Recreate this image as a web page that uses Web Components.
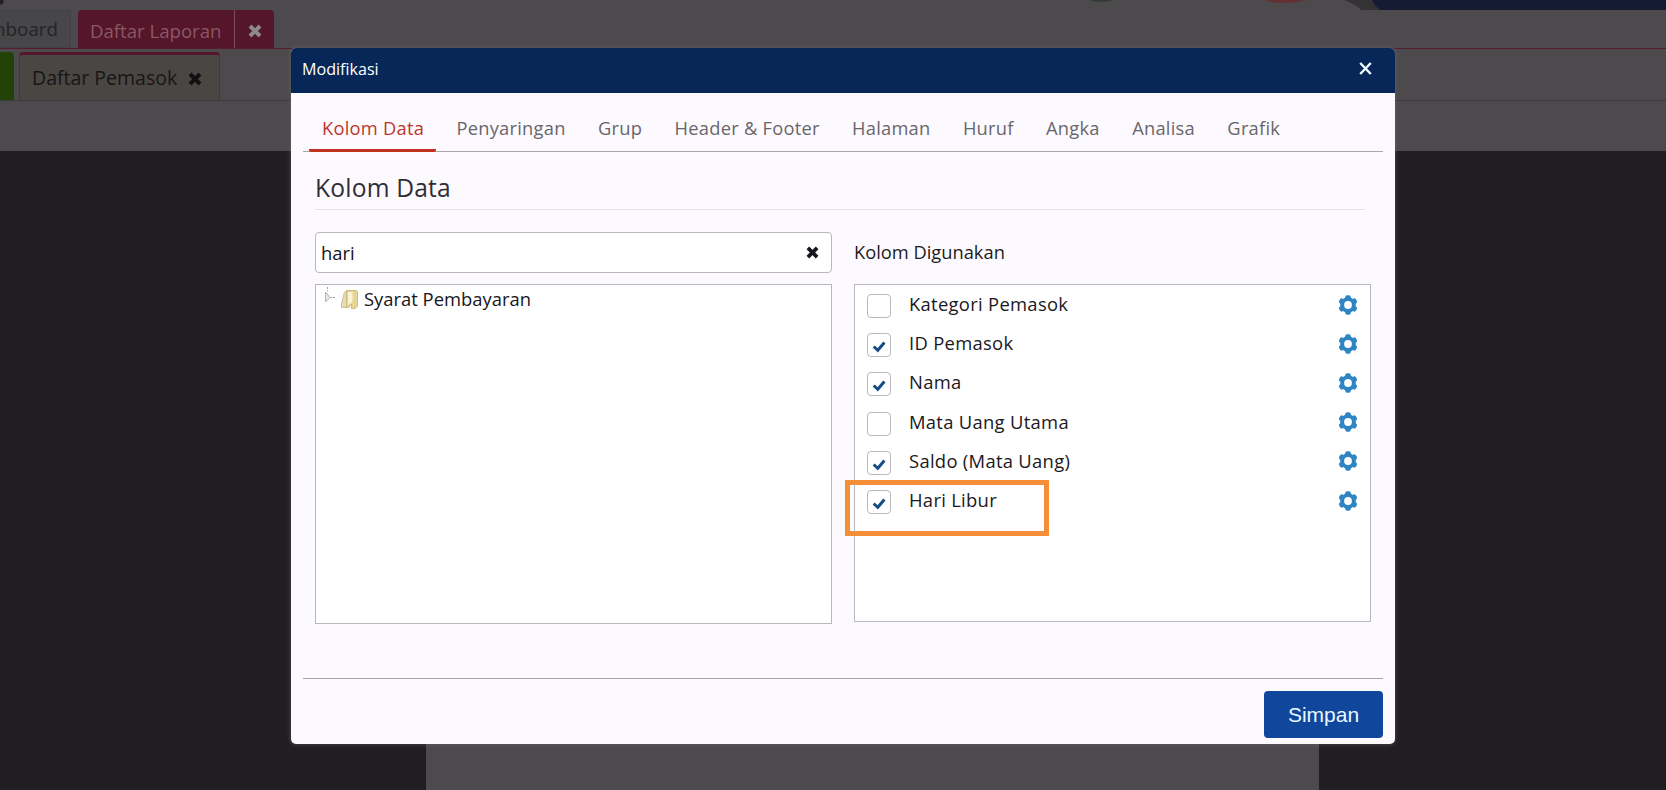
<!DOCTYPE html>
<html lang="id">
<head>
<meta charset="utf-8">
<title>Modifikasi</title>
<style>
  body {
    margin: 0;
    width: 1666px;
    height: 790px;
    overflow: hidden;
    position: relative;
    background: #211e21;
    font-family: "Open Sans", "Noto Sans", sans-serif;
  }
  modify-dialog {
    position: absolute;
    left: 291px;
    top: 48px;
  }
</style>
</head>
<body>
<report-page></report-page>

<modify-dialog heading="Modifikasi">
  <dialog-tabs slot="tabs">
    <dialog-tab active>Kolom Data</dialog-tab>
    <dialog-tab>Penyaringan</dialog-tab>
    <dialog-tab>Grup</dialog-tab>
    <dialog-tab>Header &amp; Footer</dialog-tab>
    <dialog-tab>Halaman</dialog-tab>
    <dialog-tab>Huruf</dialog-tab>
    <dialog-tab>Angka</dialog-tab>
    <dialog-tab>Analisa</dialog-tab>
    <dialog-tab>Grafik</dialog-tab>
  </dialog-tabs>
  <column-picker heading="Kolom Data">
    <search-box slot="search">hari</search-box>
    <tree-panel slot="tree">Syarat Pembayaran</tree-panel>
    <column-row>Kategori Pemasok</column-row>
    <column-row checked>ID Pemasok</column-row>
    <column-row checked>Nama</column-row>
    <column-row>Mata Uang Utama</column-row>
    <column-row checked>Saldo (Mata Uang)</column-row>
    <column-row checked highlight>Hari Libur</column-row>
  </column-picker>
  <save-button slot="footer">Simpan</save-button>
</modify-dialog>

<script>
class CrossIcon extends HTMLElement {
  connectedCallback() {
    this.attachShadow({ mode: 'open' });
    this.shadowRoot.innerHTML = `
      <style>
        :host { display: block; width: 14px; height: 14px; flex: none; }
        svg { display: block; width: 100%; height: 100%; }
      </style>
      <svg viewBox="0 0 14 14"><path d="M2 2 12 12M12 2 2 12" stroke="currentColor" stroke-width="4"/></svg>
    `;
  }
}
customElements.define('cross-icon', CrossIcon);

class ReportPage extends HTMLElement {
  connectedCallback() {
    this.attachShadow({ mode: 'open' });
    this.shadowRoot.innerHTML = `
      <style>
        :host { display: flex; flex-direction: column; height: 790px; }
        .row { display: flex; box-sizing: border-box; background: #4c4a4c; }
        .banner { height: 10px; }
        .banner svg { display: block; }
        .modules { height: 39px; border-bottom: 1px solid #541c2c; gap: 7px; }
        .tab { display: flex; align-items: center; box-sizing: border-box; white-space: nowrap; }
        .dash {
          width: 71px; justify-content: flex-end; padding: 0 12px 0 0; overflow: hidden;
          background: #474649; border: 1px solid #444145; border-left: 0; border-radius: 0 4px 0 0;
          color: #252426; font-size: 18.8px;
        }
        .red { width: 196px; background: #55152a; border-radius: 4px 4px 0 0; color: #8b5867; font-size: 18.6px; }
        .red .name { width: 157px; box-sizing: border-box; padding: 0 0 0 12px; height: 38px; line-height: 41px; border-right: 1px solid #79505c; }
        .red cross-icon { margin: 3px 0 0 13px; color: #8d8a8c; }
        .reports { height: 52px; padding-top: 3px; border-bottom: 1px solid #393739; gap: 5px; }
        .green { width: 14px; background: #234207; border-radius: 0 4px 0 0; }
        .page {
          width: 201px; padding: 0 0 0 12px; background: #4a4643;
          border: 1px solid #3b393b; border-top: 3px solid #55152a; border-bottom: 0; border-radius: 4px 4px 0 0;
          color: #171518; font-size: 19.5px;
        }
        .page cross-icon { margin: 3px 0 0 11px; color: #121013; }
        .toolbar { height: 50px; }
        .canvas { flex: 1; background: #211e21; display: flex; justify-content: center; }
        .paper { width: 893px; margin-left: 79px; background: #4c4a4c; }
      </style>
      <div class="row banner">
        <svg width="1666" height="10">
          <ellipse cx="1" cy="1" rx="2.5" ry="3.5" fill="#222023"/>
          <path d="M1089 0Q1100 4 1114 0Z" fill="#343b34"/>
          <path d="M1264 0Q1281 6 1308 0Z" fill="#633133"/>
          <path d="M1344 0Q1356 4 1361 10H1385V0Z" fill="#353235"/>
          <path d="M1372 0Q1375 7 1381 10H1666V0Z" fill="#141b32"/>
        </svg>
      </div>
      <div class="row modules">
        <div class="tab dash">Dashboard</div>
        <div class="tab red"><span class="name">Daftar Laporan</span><cross-icon></cross-icon></div>
      </div>
      <div class="row reports">
        <div class="tab green"></div>
        <div class="tab page"><span>Daftar Pemasok</span><cross-icon></cross-icon></div>
      </div>
      <div class="row toolbar"></div>
      <div class="canvas"><div class="paper"></div></div>
    `;
  }
}
customElements.define('report-page', ReportPage);

class ModifyDialog extends HTMLElement {
  connectedCallback() {
    this.attachShadow({ mode: 'open' });
    this.shadowRoot.innerHTML = `
      <style>
        :host {
          display: flex; flex-direction: column; box-sizing: border-box;
          width: 1104px; height: 696px; background: #fcfafe;
          border-radius: 5px; box-shadow: 0 0 5px rgba(110,110,110,.6);
        }
        header {
          height: 45px; box-sizing: border-box; padding: 0 23px 4px 11px; border-radius: 5px 5px 0 0;
          display: flex; align-items: center; justify-content: space-between;
          background: #082759; color: #fff; font-size: 16.1px;
        }
        header svg { display: block; }
        main { flex: 1; }
        footer {
          height: 66px; box-sizing: border-box; margin: 0 12px; padding-top: 12px;
          border-top: 1px solid #a5a3a9; display: flex; justify-content: flex-end; align-items: flex-start;
        }
      </style>
      <header>
        <span>${this.getAttribute('heading')}</span>
        <svg width="13" height="13" viewBox="0 0 13 13"><path d="M1.2 1 11.8 12M11.8 1 1.2 12" stroke="#eefcff" stroke-width="2.4"/></svg>
      </header>
      <slot name="tabs"></slot>
      <main><slot></slot></main>
      <footer><slot name="footer"></slot></footer>
    `;
  }
}
customElements.define('modify-dialog', ModifyDialog);

class DialogTabs extends HTMLElement {
  connectedCallback() {
    this.attachShadow({ mode: 'open' });
    this.shadowRoot.innerHTML = `
      <style>
        :host {
          display: flex; gap: 7.4px; box-sizing: border-box; height: 59px;
          margin: 0 12px; padding-left: 6px; border-bottom: 1px solid #aaa6ac;
        }
      </style>
      <slot></slot>
    `;
  }
}
customElements.define('dialog-tabs', DialogTabs);

class DialogTab extends HTMLElement {
  connectedCallback() {
    this.attachShadow({ mode: 'open' });
    this.shadowRoot.innerHTML = `
      <style>
        :host {
          display: block; box-sizing: border-box; height: 59px; padding: 22px 12px 0 13px;
          font-size: 18.3px; line-height: 26px; letter-spacing: .25px; white-space: nowrap;
          color: #69666b; border-bottom: 3px solid transparent; border-radius: 2px;
        }
        :host([active]) { color: #c0352b; border-bottom-color: #c2301f; }
      </style>
      <slot></slot>
    `;
  }
}
customElements.define('dialog-tab', DialogTab);

class ColumnPicker extends HTMLElement {
  connectedCallback() {
    this.attachShadow({ mode: 'open' });
    this.shadowRoot.innerHTML = `
      <style>
        :host { display: block; padding: 0 24px; }
        h2 {
          margin: 0; height: 58px; box-sizing: border-box; padding-top: 19px;
          font-size: 24.6px; line-height: 34px; font-weight: 400; letter-spacing: .2px; color: #302e35;
          border-bottom: 1px solid #e6e3e8; margin-right: 6px;
        }
        .grid {
          display: grid; grid-template-columns: 517px 517px; grid-template-rows: 41px auto;
          column-gap: 22px; row-gap: 11px; align-items: start; padding-top: 22px;
        }
        .label { font-size: 18.3px; line-height: 25px; padding: 7px 0 0 0; color: #1d1a20; }
        .used {
          height: 338px; box-sizing: border-box; padding: 1px 0;
          background: #fff; border: 1px solid #b9b6bd;
        }
      </style>
      <h2>${this.getAttribute('heading')}</h2>
      <div class="grid">
        <slot name="search"></slot>
        <div class="label">Kolom Digunakan</div>
        <slot name="tree"></slot>
        <div class="used"><slot></slot></div>
      </div>
    `;
  }
}
customElements.define('column-picker', ColumnPicker);

class SearchBox extends HTMLElement {
  connectedCallback() {
    this.attachShadow({ mode: 'open' });
    this.shadowRoot.innerHTML = `
      <style>
        :host {
          display: flex; align-items: center; justify-content: space-between; box-sizing: border-box;
          height: 41px; padding: 0 12px 0 5px; background: #fff;
          border: 1px solid #bab7be; border-radius: 4px; font-size: 18.4px; color: #141118;
        }
        cross-icon { width: 13px; height: 13px; color: #17151b; }
      </style>
      <span><slot></slot></span>
      <cross-icon></cross-icon>
    `;
  }
}
customElements.define('search-box', SearchBox);

class TreePanel extends HTMLElement {
  connectedCallback() {
    this.attachShadow({ mode: 'open' });
    this.shadowRoot.innerHTML = `
      <style>
        :host {
          display: block; box-sizing: border-box; height: 340px; padding: 1px 0 0 8px;
          background: #fff; border: 1px solid #b9b6bd;
        }
        .node { display: flex; align-items: flex-start; font-size: 18.4px; line-height: 26px; color: #18151b; }
        .node span { margin-left: 1px; }
      </style>
      <div class="node">
        <svg width="39" height="26">
          <path d="M3.5 1V5M6 11.5H12" fill="none" stroke="#a09ea2" stroke-dasharray="2 1"/>
          <path d="M1.5 6V16L6 11.5Z" fill="#e9e7eb" stroke="#b5b2b7"/>
          <path d="M20.5 6 23 4.5V21.5H17.5V18Z" fill="#e6dcb8" stroke="#cdc196"/>
          <path d="M22.5 4.5H32.5L33.5 6V20.5L31 22.5H27.5V18L24.5 21.5H22.5Z" fill="#e6d696" stroke="#cdbc80"/>
          <path d="M24 6H28.5V16L24 19Z" fill="#fbf4d3"/>
        </svg>
        <span><slot></slot></span>
      </div>
    `;
  }
}
customElements.define('tree-panel', TreePanel);

class ColumnRow extends HTMLElement {
  connectedCallback() {
    this.attachShadow({ mode: 'open' });
    const tick = this.hasAttribute('checked')
      ? '<path d="M6.7 12.5 10.8 16.3 17.4 8.6" fill="none" stroke="#174d86" stroke-width="3"/>'
      : '';
    this.shadowRoot.innerHTML = `
      <style>
        :host {
          display: flex; align-items: flex-start; position: relative; box-sizing: border-box;
          height: 39.2px; padding: 0 12px 0 12px;
        }
        .box {
          width: 24px; height: 24px; box-sizing: border-box; margin: 8px 18px 0 0; flex: none;
          border: 1px solid #bbb8be; border-radius: 4px; background: #fff;
        }
        .box svg { display: block; margin: 0 -1px; }
        .name { flex: 1; padding-top: 5px; font-size: 18.4px; line-height: 26px; letter-spacing: .3px; color: #1b181e; }
        .gear { margin-top: 8.6px; flex: none; }
        .mark {
          position: absolute; left: -10px; top: -2px; width: 204px; height: 56px;
          box-sizing: border-box; border: 5px solid #f68d37;
        }
      </style>
      <div class="box"><svg width="24" height="24">${tick}</svg></div>
      <div class="name"><slot></slot></div>
      <svg class="gear" width="20" height="20" viewBox="-10 -10 20 20">
        <g fill="#2e85c3">
          <circle r="7.8"/>
          <rect x="-2.8" y="-9.7" width="5.6" height="19.4" rx="2"/>
          <rect x="-2.8" y="-9.7" width="5.6" height="19.4" rx="2" transform="rotate(60)"/>
          <rect x="-2.8" y="-9.7" width="5.6" height="19.4" rx="2" transform="rotate(120)"/>
        </g>
        <circle r="3.9" fill="#fff"/>
      </svg>
      ${this.hasAttribute('highlight') ? '<div class="mark"></div>' : ''}
    `;
  }
}
customElements.define('column-row', ColumnRow);

class SaveButton extends HTMLElement {
  connectedCallback() {
    this.attachShadow({ mode: 'open' });
    this.shadowRoot.innerHTML = `
      <style>
        :host { display: block; }
        button {
          display: block; width: 119px; height: 47px; padding: 0; border: 0; border-radius: 4px;
          background: #10469c; color: #e9f8ff; font: 21px "Liberation Sans", Arial, sans-serif;
        }
      </style>
      <button><slot></slot></button>
    `;
  }
}
customElements.define('save-button', SaveButton);
</script>
</body>
</html>
